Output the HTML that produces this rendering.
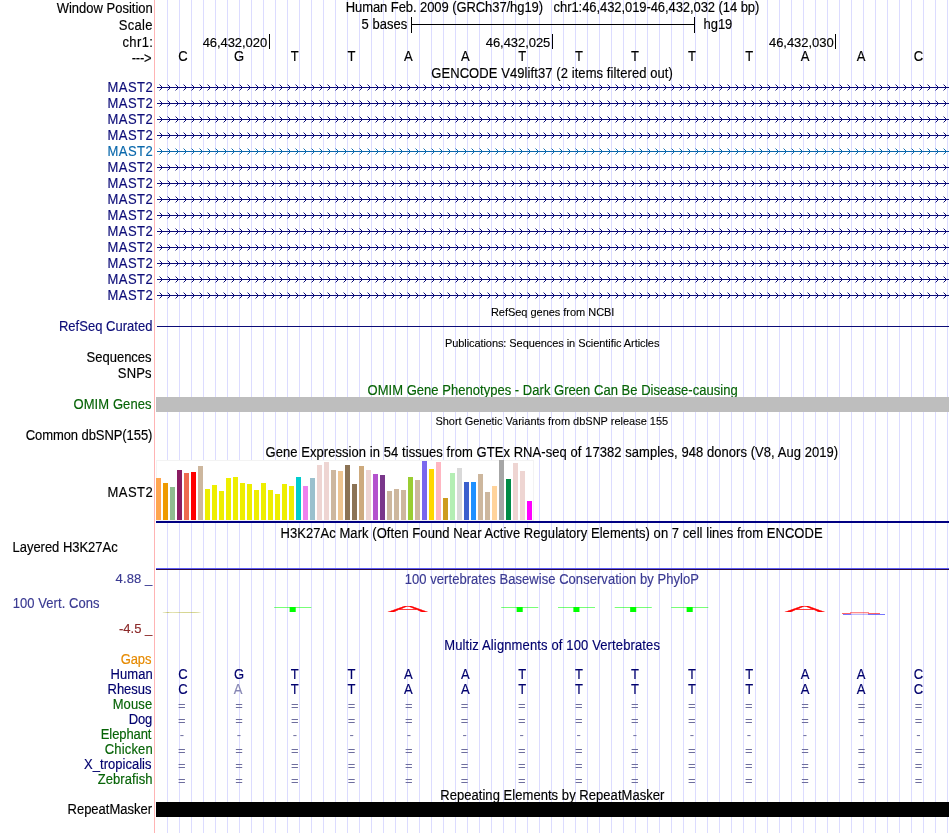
<!DOCTYPE html>
<html lang="en"><head><meta charset="utf-8"><title>UCSC Genome Browser - hg19 chr1:46,432,019-46,432,032</title>
<style>html,body{margin:0;padding:0;background:#fff;overflow:hidden}svg{display:block;will-change:transform}text{font-family:"Liberation Sans", Arial, Helvetica, sans-serif;font-size:13px;fill:#000;stroke:#000;stroke-width:.15px;white-space:pre}.s{font-size:11px;stroke-width:.1px}.r{text-anchor:end}.m{text-anchor:middle}.nv{fill:#0c0c78;stroke:#0c0c78}.lb{fill:#0a68ac;stroke:#0a68ac}.gr{fill:#076407;stroke:#076407}.bl{fill:#3a3a92;stroke:#3a3a92}.br{fill:#8c2a2a;stroke:#8c2a2a}.og{fill:#e68a00;stroke:#e68a00}.n2{fill:#00006e;stroke:#00006e}.mm{fill:#8787b4;stroke:#8787b4}.eq{fill:#6e6e9e;stroke:none}</style></head><body>
<svg width="950" height="833" viewBox="0 0 950 833">
<defs>
<pattern id="cv" patternUnits="userSpaceOnUse" x="156" y="0" width="8" height="7">
<g fill="#0c0c78" shape-rendering="crispEdges">
<rect x="3" y="0" width="1" height="1" opacity=".45"/><rect x="4" y="1" width="1" height="1"/><rect x="5" y="2" width="1" height="1"/>
<rect x="5" y="4" width="1" height="1"/><rect x="4" y="5" width="1" height="1"/><rect x="3" y="6" width="1" height="1" opacity=".45"/>
</g></pattern>
<pattern id="cl" patternUnits="userSpaceOnUse" x="156" y="0" width="8" height="7">
<g fill="#0a68ac" shape-rendering="crispEdges">
<rect x="3" y="0" width="1" height="1" opacity=".45"/><rect x="4" y="1" width="1" height="1"/><rect x="5" y="2" width="1" height="1"/>
<rect x="5" y="4" width="1" height="1"/><rect x="4" y="5" width="1" height="1"/><rect x="3" y="6" width="1" height="1" opacity=".45"/>
</g></pattern>
</defs>
<rect width="950" height="833" fill="#fff"/>
<g fill="#dcdcff" shape-rendering="crispEdges">
<rect x="167" y="0" width="1" height="833"/>
<rect x="179" y="0" width="1" height="833"/>
<rect x="191" y="0" width="1" height="833"/>
<rect x="203" y="0" width="1" height="833"/>
<rect x="215" y="0" width="1" height="833"/>
<rect x="227" y="0" width="1" height="833"/>
<rect x="239" y="0" width="1" height="833"/>
<rect x="251" y="0" width="1" height="833"/>
<rect x="263" y="0" width="1" height="833"/>
<rect x="275" y="0" width="1" height="833"/>
<rect x="287" y="0" width="1" height="833"/>
<rect x="299" y="0" width="1" height="833"/>
<rect x="311" y="0" width="1" height="833"/>
<rect x="323" y="0" width="1" height="833"/>
<rect x="335" y="0" width="1" height="833"/>
<rect x="347" y="0" width="1" height="833"/>
<rect x="359" y="0" width="1" height="833"/>
<rect x="371" y="0" width="1" height="833"/>
<rect x="383" y="0" width="1" height="833"/>
<rect x="395" y="0" width="1" height="833"/>
<rect x="407" y="0" width="1" height="833"/>
<rect x="419" y="0" width="1" height="833"/>
<rect x="431" y="0" width="1" height="833"/>
<rect x="443" y="0" width="1" height="833"/>
<rect x="455" y="0" width="1" height="833"/>
<rect x="467" y="0" width="1" height="833"/>
<rect x="479" y="0" width="1" height="833"/>
<rect x="491" y="0" width="1" height="833"/>
<rect x="503" y="0" width="1" height="833"/>
<rect x="515" y="0" width="1" height="833"/>
<rect x="527" y="0" width="1" height="833"/>
<rect x="539" y="0" width="1" height="833"/>
<rect x="551" y="0" width="1" height="833"/>
<rect x="563" y="0" width="1" height="833"/>
<rect x="575" y="0" width="1" height="833"/>
<rect x="587" y="0" width="1" height="833"/>
<rect x="599" y="0" width="1" height="833"/>
<rect x="611" y="0" width="1" height="833"/>
<rect x="623" y="0" width="1" height="833"/>
<rect x="635" y="0" width="1" height="833"/>
<rect x="647" y="0" width="1" height="833"/>
<rect x="659" y="0" width="1" height="833"/>
<rect x="671" y="0" width="1" height="833"/>
<rect x="683" y="0" width="1" height="833"/>
<rect x="695" y="0" width="1" height="833"/>
<rect x="707" y="0" width="1" height="833"/>
<rect x="719" y="0" width="1" height="833"/>
<rect x="731" y="0" width="1" height="833"/>
<rect x="743" y="0" width="1" height="833"/>
<rect x="755" y="0" width="1" height="833"/>
<rect x="767" y="0" width="1" height="833"/>
<rect x="779" y="0" width="1" height="833"/>
<rect x="791" y="0" width="1" height="833"/>
<rect x="803" y="0" width="1" height="833"/>
<rect x="815" y="0" width="1" height="833"/>
<rect x="827" y="0" width="1" height="833"/>
<rect x="839" y="0" width="1" height="833"/>
<rect x="851" y="0" width="1" height="833"/>
<rect x="863" y="0" width="1" height="833"/>
<rect x="875" y="0" width="1" height="833"/>
<rect x="887" y="0" width="1" height="833"/>
<rect x="899" y="0" width="1" height="833"/>
<rect x="911" y="0" width="1" height="833"/>
<rect x="923" y="0" width="1" height="833"/>
<rect x="935" y="0" width="1" height="833"/>
<rect x="947" y="0" width="1" height="833"/>
</g>
<rect x="154" y="0" width="1" height="833" fill="#ffb4b4" shape-rendering="crispEdges"/>
<text transform="translate(56.74,12.85) scale(1,1.070)" textLength="96.00">Window Position</text>
<text transform="translate(118.81,29.85) scale(1,1.070)" textLength="33.57">Scale</text>
<text transform="translate(122.45,46.85) scale(1,1.070)" textLength="30.54">chr1:</text>
<text transform="translate(131.82,63.35) scale(1,1.070)" textLength="19.71">---&gt;</text>
<text transform="translate(345.73,11.85) scale(1,1.070)" textLength="413.57">Human Feb. 2009 (GRCh37/hg19)   chr1:46,432,019-46,432,032 (14 bp)</text>
<text transform="translate(361.58,28.85) scale(1,1.070)" textLength="45.79">5 bases</text>
<text transform="translate(703.60,28.85) scale(1,1.070)" textLength="28.72">hg19</text>
<g fill="#000" shape-rendering="crispEdges"><rect x="411" y="17" width="1" height="16"/><rect x="694" y="17" width="1" height="16"/><rect x="411" y="24" width="284" height="1"/>
<rect x="269" y="34" width="1" height="15"/>
<rect x="552" y="34" width="1" height="15"/>
<rect x="835" y="34" width="1" height="15"/>
</g>
<text x="202.70" y="47" textLength="64.41">46,432,020</text>
<text x="485.70" y="47" textLength="64.64">46,432,025</text>
<text x="769.00" y="47" textLength="64.61">46,432,030</text>
<text class="m" transform="translate(182.85,60.85) scale(1,1.070)">C</text>
<text class="m" transform="translate(239.00,60.85) scale(1,1.070)">G</text>
<text class="m" transform="translate(294.65,60.85) scale(1,1.070)">T</text>
<text class="m" transform="translate(351.40,60.85) scale(1,1.070)">T</text>
<text class="m" transform="translate(408.35,60.85) scale(1,1.070)">A</text>
<text class="m" transform="translate(465.30,60.85) scale(1,1.070)">A</text>
<text class="m" transform="translate(522.10,60.85) scale(1,1.070)">T</text>
<text class="m" transform="translate(579.00,60.85) scale(1,1.070)">T</text>
<text class="m" transform="translate(635.00,60.85) scale(1,1.070)">T</text>
<text class="m" transform="translate(692.00,60.85) scale(1,1.070)">T</text>
<text class="m" transform="translate(749.10,60.85) scale(1,1.070)">T</text>
<text class="m" transform="translate(805.20,60.85) scale(1,1.070)">A</text>
<text class="m" transform="translate(861.20,60.85) scale(1,1.070)">A</text>
<text class="m" transform="translate(918.50,60.85) scale(1,1.070)">C</text>
<text transform="translate(431.25,77.85) scale(1,1.070)" textLength="241.66">GENCODE V49lift37 (2 items filtered out)</text>
<text class="nv" transform="translate(107.53,91.85) scale(1,1.070)" textLength="45.12">MAST2</text>
<rect x="157" y="87" width="792" height="1" fill="#0c0c78" shape-rendering="crispEdges"/>
<rect x="156" y="0" width="793" height="7" transform="translate(0,84)" fill="url(#cv)"/>
<text class="nv" transform="translate(107.53,107.85) scale(1,1.070)" textLength="45.12">MAST2</text>
<rect x="157" y="103" width="792" height="1" fill="#0c0c78" shape-rendering="crispEdges"/>
<rect x="156" y="0" width="793" height="7" transform="translate(0,100)" fill="url(#cv)"/>
<text class="nv" transform="translate(107.53,123.85) scale(1,1.070)" textLength="45.12">MAST2</text>
<rect x="157" y="119" width="792" height="1" fill="#0c0c78" shape-rendering="crispEdges"/>
<rect x="156" y="0" width="793" height="7" transform="translate(0,116)" fill="url(#cv)"/>
<text class="nv" transform="translate(107.53,139.85) scale(1,1.070)" textLength="45.12">MAST2</text>
<rect x="157" y="135" width="792" height="1" fill="#0c0c78" shape-rendering="crispEdges"/>
<rect x="156" y="0" width="793" height="7" transform="translate(0,132)" fill="url(#cv)"/>
<text class="lb" transform="translate(107.53,155.85) scale(1,1.070)" textLength="45.12">MAST2</text>
<rect x="157" y="151" width="792" height="1" fill="#0a68ac" shape-rendering="crispEdges"/>
<rect x="156" y="0" width="793" height="7" transform="translate(0,148)" fill="url(#cl)"/>
<text class="nv" transform="translate(107.53,171.85) scale(1,1.070)" textLength="45.12">MAST2</text>
<rect x="157" y="167" width="792" height="1" fill="#0c0c78" shape-rendering="crispEdges"/>
<rect x="156" y="0" width="793" height="7" transform="translate(0,164)" fill="url(#cv)"/>
<text class="nv" transform="translate(107.53,187.85) scale(1,1.070)" textLength="45.12">MAST2</text>
<rect x="157" y="183" width="792" height="1" fill="#0c0c78" shape-rendering="crispEdges"/>
<rect x="156" y="0" width="793" height="7" transform="translate(0,180)" fill="url(#cv)"/>
<text class="nv" transform="translate(107.53,203.85) scale(1,1.070)" textLength="45.12">MAST2</text>
<rect x="157" y="199" width="792" height="1" fill="#0c0c78" shape-rendering="crispEdges"/>
<rect x="156" y="0" width="793" height="7" transform="translate(0,196)" fill="url(#cv)"/>
<text class="nv" transform="translate(107.53,219.85) scale(1,1.070)" textLength="45.12">MAST2</text>
<rect x="157" y="215" width="792" height="1" fill="#0c0c78" shape-rendering="crispEdges"/>
<rect x="156" y="0" width="793" height="7" transform="translate(0,212)" fill="url(#cv)"/>
<text class="nv" transform="translate(107.53,235.85) scale(1,1.070)" textLength="45.12">MAST2</text>
<rect x="157" y="231" width="792" height="1" fill="#0c0c78" shape-rendering="crispEdges"/>
<rect x="156" y="0" width="793" height="7" transform="translate(0,228)" fill="url(#cv)"/>
<text class="nv" transform="translate(107.53,251.85) scale(1,1.070)" textLength="45.12">MAST2</text>
<rect x="157" y="247" width="792" height="1" fill="#0c0c78" shape-rendering="crispEdges"/>
<rect x="156" y="0" width="793" height="7" transform="translate(0,244)" fill="url(#cv)"/>
<text class="nv" transform="translate(107.53,267.85) scale(1,1.070)" textLength="45.12">MAST2</text>
<rect x="157" y="263" width="792" height="1" fill="#0c0c78" shape-rendering="crispEdges"/>
<rect x="156" y="0" width="793" height="7" transform="translate(0,260)" fill="url(#cv)"/>
<text class="nv" transform="translate(107.53,283.85) scale(1,1.070)" textLength="45.12">MAST2</text>
<rect x="157" y="279" width="792" height="1" fill="#0c0c78" shape-rendering="crispEdges"/>
<rect x="156" y="0" width="793" height="7" transform="translate(0,276)" fill="url(#cv)"/>
<text class="nv" transform="translate(107.53,299.85) scale(1,1.070)" textLength="45.12">MAST2</text>
<rect x="157" y="295" width="792" height="1" fill="#0c0c78" shape-rendering="crispEdges"/>
<rect x="156" y="0" width="793" height="7" transform="translate(0,292)" fill="url(#cv)"/>
<text class="s" x="490.90" y="316" textLength="123.52">RefSeq genes from NCBI</text>
<text class="nv" transform="translate(58.93,330.85) scale(1,1.070)" textLength="93.50">RefSeq Curated</text>
<rect x="157" y="326" width="792" height="1" fill="#0c0c78" shape-rendering="crispEdges"/>
<text class="s" x="444.90" y="347" textLength="214.50">Publications: Sequences in Scientific Articles</text>
<text transform="translate(86.61,361.85) scale(1,1.070)" textLength="64.96">Sequences</text>
<text transform="translate(117.81,377.85) scale(1,1.070)" textLength="33.76">SNPs</text>
<text class="gr" transform="translate(367.58,394.85) scale(1,1.070)" textLength="370.05">OMIM Gene Phenotypes - Dark Green Can Be Disease-causing</text>
<text class="gr" transform="translate(73.48,408.85) scale(1,1.070)" textLength="78.09">OMIM Genes</text>
<rect x="156" y="397" width="793" height="15" fill="#bebebe" shape-rendering="crispEdges"/>
<text class="s" x="435.40" y="425" textLength="232.76">Short Genetic Variants from dbSNP release 155</text>
<text transform="translate(25.74,439.85) scale(1,1.070)" textLength="126.67">Common dbSNP(155)</text>
<text transform="translate(265.55,456.85) scale(1,1.070)" textLength="572.66">Gene Expression in 54 tissues from GTEx RNA-seq of 17382 samples, 948 donors (V8, Aug 2019)</text>
<text transform="translate(107.53,496.85) scale(1,1.070)" textLength="45.12">MAST2</text>
<rect x="156.5" y="460.5" width="377" height="60" fill="#fff" stroke="#f3f3f3" stroke-width="1"/>
<g shape-rendering="crispEdges">
<rect x="156" y="478" width="5" height="42" fill="#FFA54F"/>
<rect x="163" y="483" width="5" height="37" fill="#EE9A00"/>
<rect x="170" y="487" width="5" height="33" fill="#8FBC8F"/>
<rect x="177" y="470" width="5" height="50" fill="#8B1C62"/>
<rect x="184" y="473" width="5" height="47" fill="#EE6A50"/>
<rect x="191" y="472" width="5" height="48" fill="#FF0000"/>
<rect x="198" y="466" width="5" height="54" fill="#CDB79E"/>
<rect x="205" y="489" width="5" height="31" fill="#EEEE00"/>
<rect x="212" y="485" width="5" height="35" fill="#EEEE00"/>
<rect x="219" y="491" width="5" height="29" fill="#EEEE00"/>
<rect x="226" y="478" width="5" height="42" fill="#EEEE00"/>
<rect x="233" y="477" width="5" height="43" fill="#EEEE00"/>
<rect x="240" y="483" width="5" height="37" fill="#EEEE00"/>
<rect x="247" y="484" width="5" height="36" fill="#EEEE00"/>
<rect x="254" y="490" width="5" height="30" fill="#EEEE00"/>
<rect x="261" y="483" width="5" height="37" fill="#EEEE00"/>
<rect x="268" y="490" width="5" height="30" fill="#EEEE00"/>
<rect x="275" y="494" width="5" height="26" fill="#EEEE00"/>
<rect x="282" y="484" width="5" height="36" fill="#EEEE00"/>
<rect x="289" y="486" width="5" height="34" fill="#EEEE00"/>
<rect x="296" y="477" width="5" height="43" fill="#00CDCD"/>
<rect x="303" y="486" width="5" height="34" fill="#EE82EE"/>
<rect x="310" y="478" width="5" height="42" fill="#9AC0CD"/>
<rect x="317" y="465" width="5" height="55" fill="#EED5D2"/>
<rect x="324" y="462" width="5" height="58" fill="#EED5D2"/>
<rect x="331" y="470" width="5" height="50" fill="#CDB79E"/>
<rect x="338" y="471" width="5" height="49" fill="#EEC591"/>
<rect x="345" y="465" width="5" height="55" fill="#8B7355"/>
<rect x="352" y="484" width="5" height="36" fill="#8B7355"/>
<rect x="359" y="466" width="5" height="54" fill="#CDAA7D"/>
<rect x="366" y="470" width="5" height="50" fill="#EED5D2"/>
<rect x="373" y="474" width="5" height="46" fill="#B452CD"/>
<rect x="380" y="475" width="5" height="45" fill="#7A378B"/>
<rect x="387" y="491" width="5" height="29" fill="#CDB79E"/>
<rect x="394" y="489" width="5" height="31" fill="#CDB79E"/>
<rect x="401" y="490" width="5" height="30" fill="#CDB79E"/>
<rect x="408" y="477" width="5" height="43" fill="#9ACD32"/>
<rect x="415" y="480" width="5" height="40" fill="#CDB79E"/>
<rect x="422" y="461" width="5" height="59" fill="#7A67EE"/>
<rect x="429" y="469" width="5" height="51" fill="#FFD700"/>
<rect x="436" y="462" width="5" height="58" fill="#FFB6C1"/>
<rect x="443" y="498" width="5" height="22" fill="#CD9B1D"/>
<rect x="450" y="473" width="5" height="47" fill="#B4EEB4"/>
<rect x="457" y="468" width="5" height="52" fill="#D9D9D9"/>
<rect x="464" y="482" width="5" height="38" fill="#3A5FCD"/>
<rect x="471" y="482" width="5" height="38" fill="#1E90FF"/>
<rect x="478" y="474" width="5" height="46" fill="#CDB79E"/>
<rect x="485" y="492" width="5" height="28" fill="#CDB79E"/>
<rect x="492" y="486" width="5" height="34" fill="#FFD39B"/>
<rect x="499" y="460" width="5" height="60" fill="#A6A6A6"/>
<rect x="506" y="479" width="5" height="41" fill="#008B45"/>
<rect x="513" y="463" width="5" height="57" fill="#EED5D2"/>
<rect x="520" y="471" width="5" height="49" fill="#EED5D2"/>
<rect x="527" y="501" width="5" height="19" fill="#FF00FF"/>
<rect x="156" y="521" width="793" height="2" fill="#000082"/>
</g>
<text transform="translate(280.53,537.85) scale(1,1.070)" textLength="542.12">H3K27Ac Mark (Often Found Near Active Regulatory Elements) on 7 cell lines from ENCODE</text>
<text transform="translate(12.53,551.85) scale(1,1.070)" textLength="105.11">Layered H3K27Ac</text>
<g shape-rendering="crispEdges"><rect x="156" y="568" width="793" height="1" fill="#5a5af5"/><rect x="156" y="569" width="793" height="1" fill="#2d0a41"/></g>
<text class="bl" transform="translate(404.81,583.85) scale(1,1.070)" textLength="294.08">100 vertebrates Basewise Conservation by PhyloP</text>
<text class="bl" x="115.60" y="583" textLength="36.65">4.88 _</text>
<text class="bl" transform="translate(12.81,607.85) scale(1,1.070)" textLength="86.66">100 Vert. Cons</text>
<text class="br" x="119.02" y="633" textLength="33.23">-4.5 _</text>
<text transform="translate(162.30,613.00) scale(0.6173,0.0196)" x="-4.60" y="0" style="font-size:100px;fill:#a0a000;opacity:0.80;stroke:none">C</text>
<text transform="translate(274.20,612.00) scale(0.6555,0.0698)" x="-2.10" y="0" style="font-size:100px;fill:#00ff00;opacity:1.00;stroke:none">T</text>
<text transform="translate(501.06,612.00) scale(0.6555,0.0698)" x="-2.10" y="0" style="font-size:100px;fill:#00ff00;opacity:1.00;stroke:none">T</text>
<text transform="translate(557.77,612.00) scale(0.6555,0.0698)" x="-2.10" y="0" style="font-size:100px;fill:#00ff00;opacity:1.00;stroke:none">T</text>
<text transform="translate(614.49,612.00) scale(0.6555,0.0698)" x="-2.10" y="0" style="font-size:100px;fill:#00ff00;opacity:1.00;stroke:none">T</text>
<text transform="translate(671.20,612.00) scale(0.6555,0.0698)" x="-2.10" y="0" style="font-size:100px;fill:#00ff00;opacity:1.00;stroke:none">T</text>
<text transform="translate(387.80,611.80) scale(0.5940,0.0838)" x="0.20" y="0" style="font-size:100px;fill:#ff0000;opacity:1.00;stroke:#ff0000;stroke-width:0.70;vector-effect:non-scaling-stroke">A</text>
<text transform="translate(784.80,611.80) scale(0.5940,0.0838)" x="0.20" y="0" style="font-size:100px;fill:#ff0000;opacity:1.00;stroke:#ff0000;stroke-width:0.70;vector-effect:non-scaling-stroke">A</text>
<g shape-rendering="crispEdges"><rect x="842" y="613" width="9" height="1" fill="#ff0000" opacity=".6"/><rect x="850" y="612" width="19" height="1" fill="#ff0000" opacity=".45"/><rect x="851" y="613" width="17" height="1" fill="#ff0000" opacity=".15"/><rect x="868" y="613" width="12" height="1" fill="#ff0000" opacity=".6"/><rect x="843" y="614" width="8" height="1" fill="#3c3cff" opacity=".7"/><rect x="851" y="614" width="17" height="1" fill="#3c3cff" opacity=".35"/><rect x="868" y="614" width="17" height="1" fill="#3c3cff" opacity=".7"/></g>
<text class="n2" transform="translate(444.23,649.85) scale(1,1.070)" textLength="215.74">Multiz Alignments of 100 Vertebrates</text>
<text class="og" transform="translate(120.75,663.85) scale(1,1.070)" textLength="30.77">Gaps</text>
<text class="n2" transform="translate(110.53,678.85) scale(1,1.070)" textLength="42.11">Human</text>
<text class="m n2" transform="translate(182.85,678.85) scale(1,1.070)">C</text>
<text class="m n2" transform="translate(239.00,678.85) scale(1,1.070)">G</text>
<text class="m n2" transform="translate(294.65,678.85) scale(1,1.070)">T</text>
<text class="m n2" transform="translate(351.40,678.85) scale(1,1.070)">T</text>
<text class="m n2" transform="translate(408.35,678.85) scale(1,1.070)">A</text>
<text class="m n2" transform="translate(465.30,678.85) scale(1,1.070)">A</text>
<text class="m n2" transform="translate(522.10,678.85) scale(1,1.070)">T</text>
<text class="m n2" transform="translate(579.00,678.85) scale(1,1.070)">T</text>
<text class="m n2" transform="translate(635.00,678.85) scale(1,1.070)">T</text>
<text class="m n2" transform="translate(692.00,678.85) scale(1,1.070)">T</text>
<text class="m n2" transform="translate(749.10,678.85) scale(1,1.070)">T</text>
<text class="m n2" transform="translate(805.20,678.85) scale(1,1.070)">A</text>
<text class="m n2" transform="translate(861.20,678.85) scale(1,1.070)">A</text>
<text class="m n2" transform="translate(918.50,678.85) scale(1,1.070)">C</text>
<text class="n2" transform="translate(107.53,693.85) scale(1,1.070)" textLength="43.99">Rhesus</text>
<text class="m n2" transform="translate(182.85,693.85) scale(1,1.070)">C</text>
<text class="m mm" transform="translate(238.00,693.85) scale(1,1.070)">A</text>
<text class="m n2" transform="translate(294.65,693.85) scale(1,1.070)">T</text>
<text class="m n2" transform="translate(351.40,693.85) scale(1,1.070)">T</text>
<text class="m n2" transform="translate(408.35,693.85) scale(1,1.070)">A</text>
<text class="m n2" transform="translate(465.30,693.85) scale(1,1.070)">A</text>
<text class="m n2" transform="translate(522.10,693.85) scale(1,1.070)">T</text>
<text class="m n2" transform="translate(579.00,693.85) scale(1,1.070)">T</text>
<text class="m n2" transform="translate(635.00,693.85) scale(1,1.070)">T</text>
<text class="m n2" transform="translate(692.00,693.85) scale(1,1.070)">T</text>
<text class="m n2" transform="translate(749.10,693.85) scale(1,1.070)">T</text>
<text class="m n2" transform="translate(805.20,693.85) scale(1,1.070)">A</text>
<text class="m n2" transform="translate(861.20,693.85) scale(1,1.070)">A</text>
<text class="m n2" transform="translate(918.50,693.85) scale(1,1.070)">C</text>
<text class="gr" transform="translate(112.63,708.85) scale(1,1.070)" textLength="39.54">Mouse</text>
<text class="m eq" transform="translate(181.80,709.95) scale(1,.923)">=</text>
<text class="m eq" transform="translate(238.95,709.95) scale(1,.923)">=</text>
<text class="m eq" transform="translate(294.80,709.95) scale(1,.923)">=</text>
<text class="m eq" transform="translate(351.60,709.95) scale(1,.923)">=</text>
<text class="m eq" transform="translate(408.80,709.95) scale(1,.923)">=</text>
<text class="m eq" transform="translate(464.60,709.95) scale(1,.923)">=</text>
<text class="m eq" transform="translate(521.70,709.95) scale(1,.923)">=</text>
<text class="m eq" transform="translate(578.75,709.95) scale(1,.923)">=</text>
<text class="m eq" transform="translate(634.85,709.95) scale(1,.923)">=</text>
<text class="m eq" transform="translate(691.80,709.95) scale(1,.923)">=</text>
<text class="m eq" transform="translate(748.85,709.95) scale(1,.923)">=</text>
<text class="m eq" transform="translate(804.95,709.95) scale(1,.923)">=</text>
<text class="m eq" transform="translate(861.60,709.95) scale(1,.923)">=</text>
<text class="m eq" transform="translate(918.50,709.95) scale(1,.923)">=</text>
<text class="n2" transform="translate(128.73,723.85) scale(1,1.070)" textLength="23.50">Dog</text>
<text class="m eq" transform="translate(181.80,724.95) scale(1,.923)">=</text>
<text class="m eq" transform="translate(238.95,724.95) scale(1,.923)">=</text>
<text class="m eq" transform="translate(294.80,724.95) scale(1,.923)">=</text>
<text class="m eq" transform="translate(351.60,724.95) scale(1,.923)">=</text>
<text class="m eq" transform="translate(408.80,724.95) scale(1,.923)">=</text>
<text class="m eq" transform="translate(464.60,724.95) scale(1,.923)">=</text>
<text class="m eq" transform="translate(521.70,724.95) scale(1,.923)">=</text>
<text class="m eq" transform="translate(578.75,724.95) scale(1,.923)">=</text>
<text class="m eq" transform="translate(634.85,724.95) scale(1,.923)">=</text>
<text class="m eq" transform="translate(691.80,724.95) scale(1,.923)">=</text>
<text class="m eq" transform="translate(748.85,724.95) scale(1,.923)">=</text>
<text class="m eq" transform="translate(804.95,724.95) scale(1,.923)">=</text>
<text class="m eq" transform="translate(861.60,724.95) scale(1,.923)">=</text>
<text class="m eq" transform="translate(918.50,724.95) scale(1,.923)">=</text>
<text class="gr" transform="translate(100.73,738.85) scale(1,1.070)" textLength="50.76">Elephant</text>
<text class="m eq" x="181.80" y="739">-</text>
<text class="m eq" x="238.95" y="739">-</text>
<text class="m eq" x="294.80" y="739">-</text>
<text class="m eq" x="351.60" y="739">-</text>
<text class="m eq" x="408.80" y="739">-</text>
<text class="m eq" x="464.60" y="739">-</text>
<text class="m eq" x="521.70" y="739">-</text>
<text class="m eq" x="578.75" y="739">-</text>
<text class="m eq" x="634.85" y="739">-</text>
<text class="m eq" x="691.80" y="739">-</text>
<text class="m eq" x="748.85" y="739">-</text>
<text class="m eq" x="804.95" y="739">-</text>
<text class="m eq" x="861.60" y="739">-</text>
<text class="m eq" x="918.50" y="739">-</text>
<text class="gr" transform="translate(104.84,753.85) scale(1,1.070)" textLength="47.80">Chicken</text>
<text class="m eq" transform="translate(181.80,754.95) scale(1,.923)">=</text>
<text class="m eq" transform="translate(238.95,754.95) scale(1,.923)">=</text>
<text class="m eq" transform="translate(294.80,754.95) scale(1,.923)">=</text>
<text class="m eq" transform="translate(351.60,754.95) scale(1,.923)">=</text>
<text class="m eq" transform="translate(408.80,754.95) scale(1,.923)">=</text>
<text class="m eq" transform="translate(464.60,754.95) scale(1,.923)">=</text>
<text class="m eq" transform="translate(521.70,754.95) scale(1,.923)">=</text>
<text class="m eq" transform="translate(578.75,754.95) scale(1,.923)">=</text>
<text class="m eq" transform="translate(634.85,754.95) scale(1,.923)">=</text>
<text class="m eq" transform="translate(691.80,754.95) scale(1,.923)">=</text>
<text class="m eq" transform="translate(748.85,754.95) scale(1,.923)">=</text>
<text class="m eq" transform="translate(804.95,754.95) scale(1,.923)">=</text>
<text class="m eq" transform="translate(861.60,754.95) scale(1,.923)">=</text>
<text class="m eq" transform="translate(918.50,754.95) scale(1,.923)">=</text>
<text class="n2" transform="translate(84.11,768.85) scale(1,1.070)" textLength="67.41">X_tropicalis</text>
<text class="m eq" transform="translate(181.80,769.95) scale(1,.923)">=</text>
<text class="m eq" transform="translate(238.95,769.95) scale(1,.923)">=</text>
<text class="m eq" transform="translate(294.80,769.95) scale(1,.923)">=</text>
<text class="m eq" transform="translate(351.60,769.95) scale(1,.923)">=</text>
<text class="m eq" transform="translate(408.80,769.95) scale(1,.923)">=</text>
<text class="m eq" transform="translate(464.60,769.95) scale(1,.923)">=</text>
<text class="m eq" transform="translate(521.70,769.95) scale(1,.923)">=</text>
<text class="m eq" transform="translate(578.75,769.95) scale(1,.923)">=</text>
<text class="m eq" transform="translate(634.85,769.95) scale(1,.923)">=</text>
<text class="m eq" transform="translate(691.80,769.95) scale(1,.923)">=</text>
<text class="m eq" transform="translate(748.85,769.95) scale(1,.923)">=</text>
<text class="m eq" transform="translate(804.95,769.95) scale(1,.923)">=</text>
<text class="m eq" transform="translate(861.60,769.95) scale(1,.923)">=</text>
<text class="m eq" transform="translate(918.50,769.95) scale(1,.923)">=</text>
<text class="gr" transform="translate(97.69,783.85) scale(1,1.070)" textLength="54.76">Zebrafish</text>
<text class="m eq" transform="translate(181.80,784.95) scale(1,.923)">=</text>
<text class="m eq" transform="translate(238.95,784.95) scale(1,.923)">=</text>
<text class="m eq" transform="translate(294.80,784.95) scale(1,.923)">=</text>
<text class="m eq" transform="translate(351.60,784.95) scale(1,.923)">=</text>
<text class="m eq" transform="translate(408.80,784.95) scale(1,.923)">=</text>
<text class="m eq" transform="translate(464.60,784.95) scale(1,.923)">=</text>
<text class="m eq" transform="translate(521.70,784.95) scale(1,.923)">=</text>
<text class="m eq" transform="translate(578.75,784.95) scale(1,.923)">=</text>
<text class="m eq" transform="translate(634.85,784.95) scale(1,.923)">=</text>
<text class="m eq" transform="translate(691.80,784.95) scale(1,.923)">=</text>
<text class="m eq" transform="translate(748.85,784.95) scale(1,.923)">=</text>
<text class="m eq" transform="translate(804.95,784.95) scale(1,.923)">=</text>
<text class="m eq" transform="translate(861.60,784.95) scale(1,.923)">=</text>
<text class="m eq" transform="translate(918.50,784.95) scale(1,.923)">=</text>
<text transform="translate(440.23,799.85) scale(1,1.070)" textLength="224.18">Repeating Elements by RepeatMasker</text>
<text transform="translate(67.53,813.85) scale(1,1.070)" textLength="84.48">RepeatMasker</text>
<rect x="156" y="802" width="793" height="15" fill="#000" shape-rendering="crispEdges"/>
</svg></body></html>
